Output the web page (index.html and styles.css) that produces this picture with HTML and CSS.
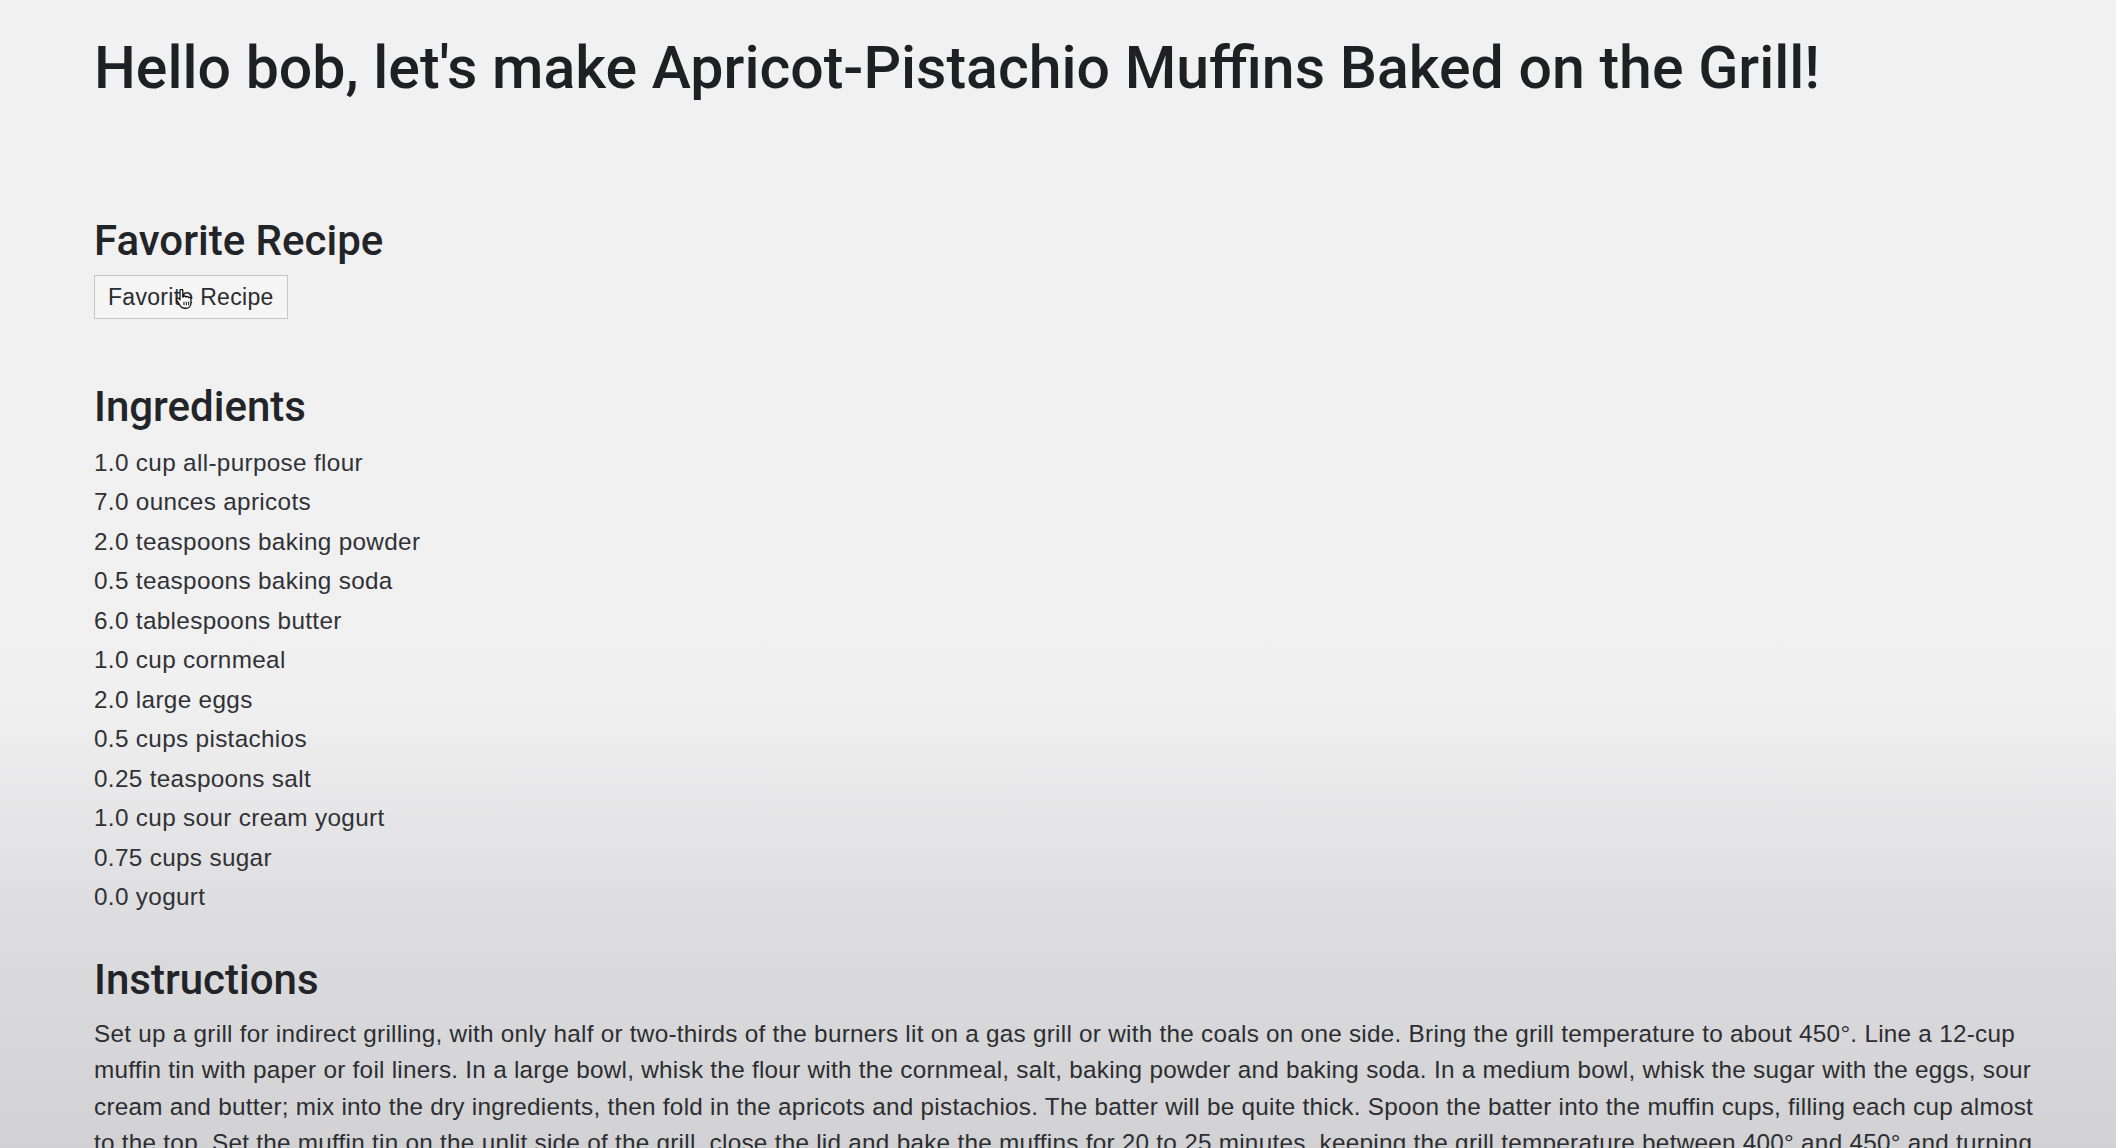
FILE: index.html
```html
<!DOCTYPE html>
<html lang="en">
<head>
<meta charset="utf-8">
<title>Apricot-Pistachio Muffins Baked on the Grill</title>
<link rel="stylesheet" href="styles.css">
</head>
<body>
<main class="page">
  <h1 class="title">Hello bob, let's make Apricot-Pistachio Muffins Baked on the Grill!</h1>

  <section class="fav">
    <h3 class="section-head">Favorite Recipe</h3>
    <div class="btn-wrap">
      <button class="fav-btn" type="button">Favorite Recipe</button>
      <svg class="cursor" viewBox="0 0 16 18" width="19" height="21" aria-hidden="true">
        <path d="M5 1.5c0-.8.6-1.3 1.2-1.3s1.2.5 1.2 1.3V7l.3-.1c.2-.6.7-.9 1.2-.9.6 0 1.1.4 1.2 1 .2-.4.6-.6 1.1-.6.6 0 1.1.5 1.2 1.1.2-.2.5-.3.8-.3.7 0 1.2.6 1.2 1.3v3.4c0 2.6-1.8 4.6-4.4 4.6H8.8c-1.5 0-2.6-.6-3.4-1.8L2.2 9.6c-.4-.6-.2-1.3.4-1.6.5-.3 1.1-.2 1.5.2L5 9.3V1.5z" fill="#fff" stroke="#111" stroke-width="1.1" stroke-linejoin="round"/>
        <path d="M8.4 11v3M10.4 11v3M12.4 11v3" stroke="#111" stroke-width=".9" fill="none"/>
      </svg>
    </div>
  </section>

  <section class="ingredients">
    <h3 class="section-head">Ingredients</h3>
    <ul class="ing-list">
      <li>1.0 cup all-purpose flour</li>
      <li>7.0 ounces apricots</li>
      <li>2.0 teaspoons baking powder</li>
      <li>0.5 teaspoons baking soda</li>
      <li>6.0 tablespoons butter</li>
      <li>1.0 cup cornmeal</li>
      <li>2.0 large eggs</li>
      <li>0.5 cups pistachios</li>
      <li>0.25 teaspoons salt</li>
      <li>1.0 cup sour cream yogurt</li>
      <li>0.75 cups sugar</li>
      <li>0.0 yogurt</li>
    </ul>
  </section>

  <section class="instructions">
    <h3 class="section-head">Instructions</h3>
    <p class="inst-text">Set up a grill for indirect grilling, with only half or two-thirds of the burners lit on a gas grill or with the coals on one side. Bring the grill temperature to about 450°. Line a 12-cup muffin tin with paper or foil liners. In a large bowl, whisk the flour with the cornmeal, salt, baking powder and baking soda. In a medium bowl, whisk the sugar with the eggs, sour cream and butter; mix into the dry ingredients, then fold in the apricots and pistachios. The batter will be quite thick. Spoon the batter into the muffin cups, filling each cup almost to the top. Set the muffin tin on the unlit side of the grill, close the lid and bake the muffins for 20 to 25 minutes, keeping the grill temperature between 400° and 450° and turning the pan halfway through baking, until a toothpick inserted in the center comes out clean.</p>
  </section>
</main>
</body>
</html>
```
FILE: styles.css
```css
html, body {
  margin: 0;
  padding: 0;
}
body {
  min-height: 1148px;
  background: linear-gradient(to bottom, #f1f1f2 0, #f0f0f1 700px, #dcdcde 930px, #d2d2d4 1148px);
  color: #222427;
  font-family: "Liberation Sans", Arial, sans-serif;
}
.page {
  padding: 33px 40px 0 94px;
}
.title {
  margin: 0;
  font-family: Roboto, "Liberation Sans", sans-serif;
  font-weight: 500;
  font-size: 59px;
  line-height: 1.2;
  color: #1e2023;
}
.section-head {
  margin: 0;
  font-family: Roboto, "Liberation Sans", sans-serif;
  font-weight: 500;
  font-size: 42px;
  line-height: 1.2;
  color: #222427;
}
.fav {
  margin-top: 112px;
}
.btn-wrap {
  position: relative;
  display: inline-block;
  margin-top: 9px;
}
.fav-btn {
  display: block;
  font-family: "Liberation Sans", Arial, sans-serif;
  font-size: 23px;
  letter-spacing: 0.3px;
  line-height: 32px;
  padding: 5px 13px;
  border: 1px solid #c6c6c8;
  border-radius: 0;
  background: #f5f5f6;
  color: #2a2c2f;
}
.cursor {
  position: absolute;
  left: 80px;
  top: 14px;
}
.ingredients {
  margin-top: 63px;
}
.ing-list {
  list-style: none;
  margin: 10px 0 0 0;
  padding: 0;
  font-size: 24.3px;
  letter-spacing: 0.33px;
  line-height: 39.5px;
  color: #303236;
}
.instructions {
  margin-top: 38px;
}
.inst-text {
  margin: 11px 0 0 0;
  font-size: 24.3px;
  letter-spacing: 0.26px;
  line-height: 36.5px;
  color: #2c2e31;
  max-width: 1960px;
}
```
